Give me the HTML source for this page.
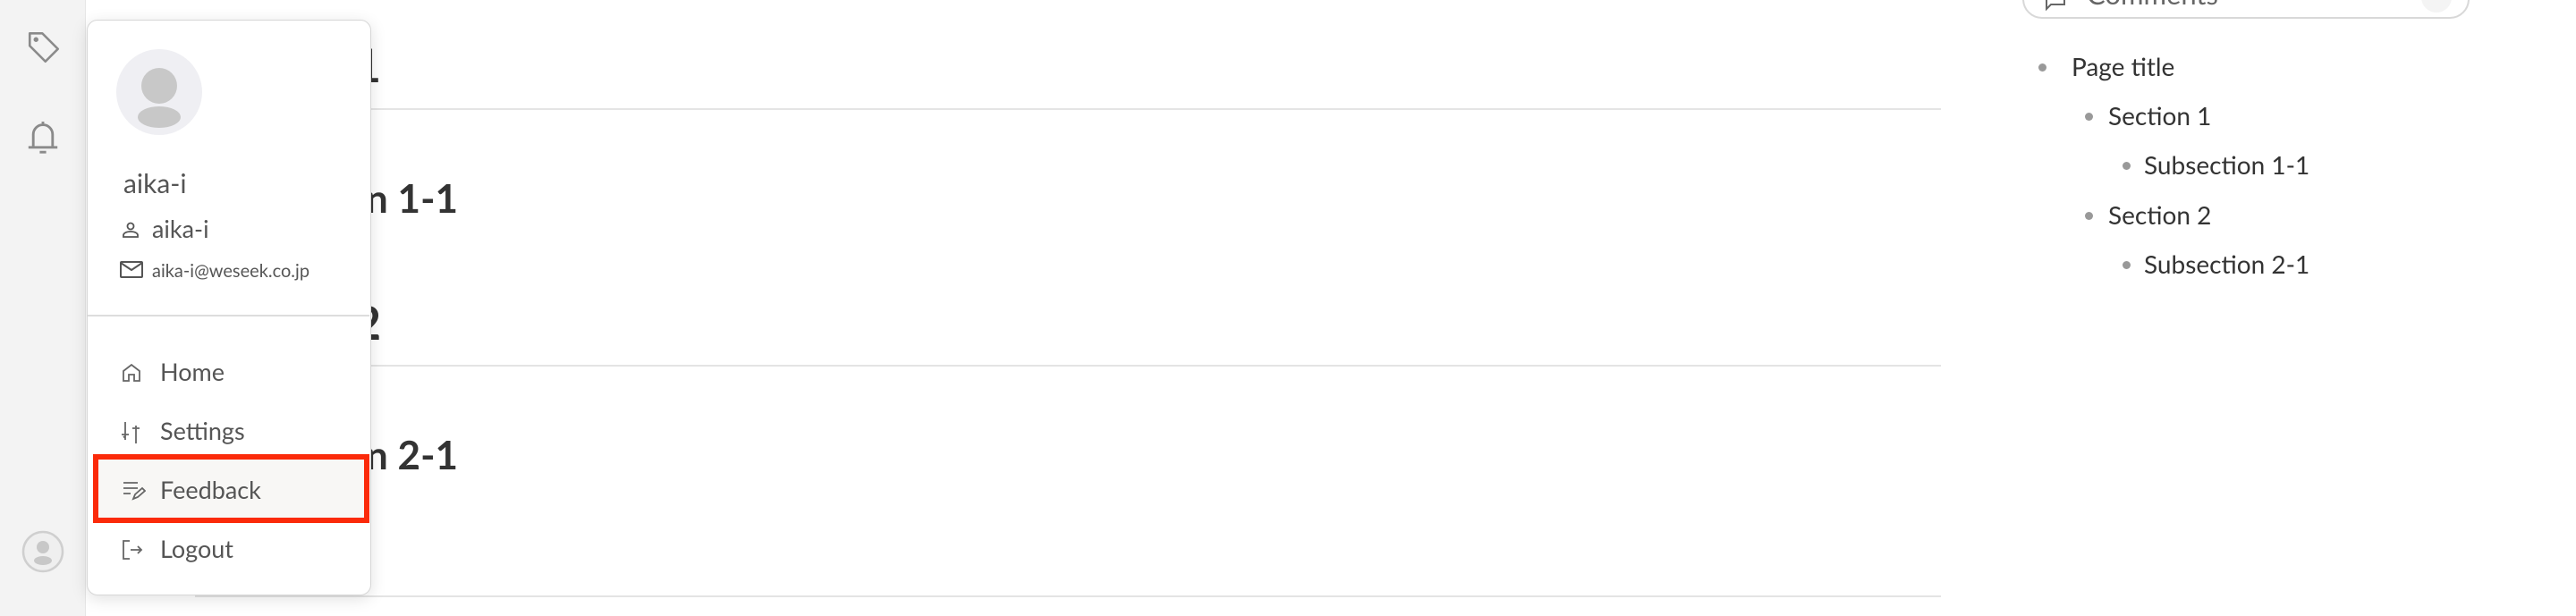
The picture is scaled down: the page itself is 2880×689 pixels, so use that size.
<!DOCTYPE html>
<html><head><meta charset="utf-8"><style>
*{box-sizing:border-box;margin:0;padding:0}
body{width:2880px;height:689px;overflow:hidden;background:#fff;font-family:"Lato","Liberation Sans",sans-serif;color:#333;position:relative}
.side{position:absolute;left:0;top:0;width:96px;height:689px;background:#f3f3f3;border-right:1px solid #e6e6e6}
.abs{position:absolute}
.h{position:absolute;left:0;width:0;white-space:nowrap;font-weight:bold;color:#333}
.h span{position:absolute;right:0;top:0}
.hr{position:absolute;left:218px;width:1952px;height:2px;background:#e4e4e4}
.dd{position:absolute;left:97px;top:22px;width:318px;height:644px;background:#fff;border:1.5px solid #d6d6d6;border-radius:12px;box-shadow:0 4px 18px rgba(0,0,0,.12)}
.mi{position:absolute;left:0;font-size:27px;color:#555}
.toc{position:absolute;font-size:28px;color:#333;white-space:nowrap}
.dot{position:absolute;width:9px;height:9px;border-radius:50%;background:#999}
</style></head><body>
<div class="side">
<svg class="abs" style="left:28px;top:32px" width="42" height="42" viewBox="0 0 24 24" fill="none" stroke="#8a8a8a" stroke-width="1.5"><path d="M3 3h8l10 10-8 8L3 11z" stroke-linejoin="round"/><circle cx="7" cy="7" r="0.8" fill="#8a8a8a"/></svg>
<svg class="abs" style="left:30px;top:132px" width="36" height="44" viewBox="0 0 20 24" fill="none" stroke="#8a8a8a" stroke-width="1.6"><path d="M4 18V10a6 6 0 0112 0v8M1 18h18M8 21h4M10 2v2"/></svg>
<svg class="abs" style="left:24px;top:593px" width="48" height="48" viewBox="0 0 48 48"><circle cx="24" cy="24" r="22" fill="#efefef" stroke="#cfcfcf" stroke-width="2.5"/><circle cx="24" cy="19" r="7" fill="#c8c8c8"/><ellipse cx="24" cy="34" rx="10" ry="5" fill="#c8c8c8"/></svg>
</div>

<div class="h" style="top:42px;font-size:52px"><span style="right:-426px">Section 1</span></div>
<div class="hr" style="top:121px"></div>
<div class="h" style="top:196px;font-size:44px"><span style="right:-512px">Section 1-1</span></div>
<div class="h" style="top:330px;font-size:52px"><span style="right:-426px">Section 2</span></div>
<div class="hr" style="top:408px"></div>
<div class="h" style="top:483px;font-size:44px"><span style="right:-512px">Section 2-1</span></div>
<div class="hr" style="top:666px"></div>

<div class="abs" style="left:2261px;top:-30px;width:500px;height:51px;border:2px solid #d8d8d8;border-radius:22px;"></div>
<svg class="abs" style="left:2287px;top:-10px" width="22" height="22" viewBox="0 0 22 22" fill="none" stroke="#666" stroke-width="2"><path d="M1 0v20l5-5h15V0"/></svg>
<div class="abs" style="left:2333px;top:-26px;font-size:31px;color:#666">Comments</div>
<div class="abs" style="left:2707px;top:-20px;width:34px;height:34px;border-radius:50%;background:#f4f4f4"></div>

<div class="dot" style="left:2279px;top:71px"></div><div class="toc" style="left:2316px;top:57px">Page title</div>
<div class="dot" style="left:2331px;top:126px"></div><div class="toc" style="left:2357px;top:112px">Section 1</div>
<div class="dot" style="left:2373px;top:181px"></div><div class="toc" style="left:2397px;top:167px">Subsection 1-1</div>
<div class="dot" style="left:2331px;top:237px"></div><div class="toc" style="left:2357px;top:223px">Section 2</div>
<div class="dot" style="left:2373px;top:292px"></div><div class="toc" style="left:2397px;top:278px">Subsection 2-1</div>

<div class="dd">
<svg class="abs" style="left:32px;top:32px" width="96" height="96" viewBox="0 0 96 96"><circle cx="48" cy="48" r="48" fill="#efeff3"/><circle cx="48" cy="41" r="20" fill="#c8c8c8"/><ellipse cx="48" cy="76" rx="24" ry="12" fill="#c8c8c8"/></svg>
<div class="abs" style="left:40px;top:164px;font-size:30px;color:#555">aika-i</div>
<svg class="abs" style="left:38px;top:224px" width="20" height="20" viewBox="0 0 20 20" fill="none" stroke="#555" stroke-width="1.8"><circle cx="10" cy="6" r="3.5"/><path d="M2 18v-2c0-2 3-4 8-4s8 2 8 4v2z"/></svg>
<div class="abs" style="left:72px;top:216px;font-size:27px;color:#555">aika-i</div>
<svg class="abs" style="left:36px;top:269px" width="26" height="20" viewBox="0 0 26 20" fill="none" stroke="#555" stroke-width="2"><rect x="1" y="1" width="24" height="17" rx="1"/><path d="M1 2l12 8 12-8"/></svg>
<div class="abs" style="left:72px;top:268px;font-size:20px;color:#555">aika-i@weseek.co.jp</div>
<div class="abs" style="left:0;top:329px;width:315px;height:2px;background:#ddd"></div>

<svg class="abs" style="left:38px;top:383px" width="22" height="22" viewBox="0 0 22 22" fill="none" stroke="#666" stroke-width="1.8"><path d="M2 20V9l9-7 9 7v11h-6v-7H8v7z"/></svg>
<div class="mi" style="top:376px;left:81px">Home</div>
<svg class="abs" style="left:37px;top:448px" width="24" height="26" viewBox="0 0 24 26" fill="none" stroke="#666" stroke-width="1.8"><path d="M5 1v20M1 15h8M5 19l-2-2M17 25V5M13 8h8"/></svg>
<div class="mi" style="top:442px;left:81px">Settings</div>
<div class="abs" style="left:6px;top:485px;width:309px;height:77px;background:#f8f7f5;border:6px solid #fb2a0a"></div>
<svg class="abs" style="left:39px;top:515px" width="26" height="22" viewBox="0 0 26 22" fill="none" stroke="#666" stroke-width="1.8"><path d="M1 2h16M1 8h16M1 14h8M12 20l2-5 8-7 3 3-8 7z"/></svg>
<div class="mi" style="top:508px;left:81px">Feedback</div>
<svg class="abs" style="left:38px;top:580px" width="24" height="24" viewBox="0 0 24 24" fill="none" stroke="#666" stroke-width="1.8"><path d="M9 2H2v20h7M10 12h12M18 8l4 4-4 4"/></svg>
<div class="mi" style="top:574px;left:81px">Logout</div>
</div>
</body></html>
